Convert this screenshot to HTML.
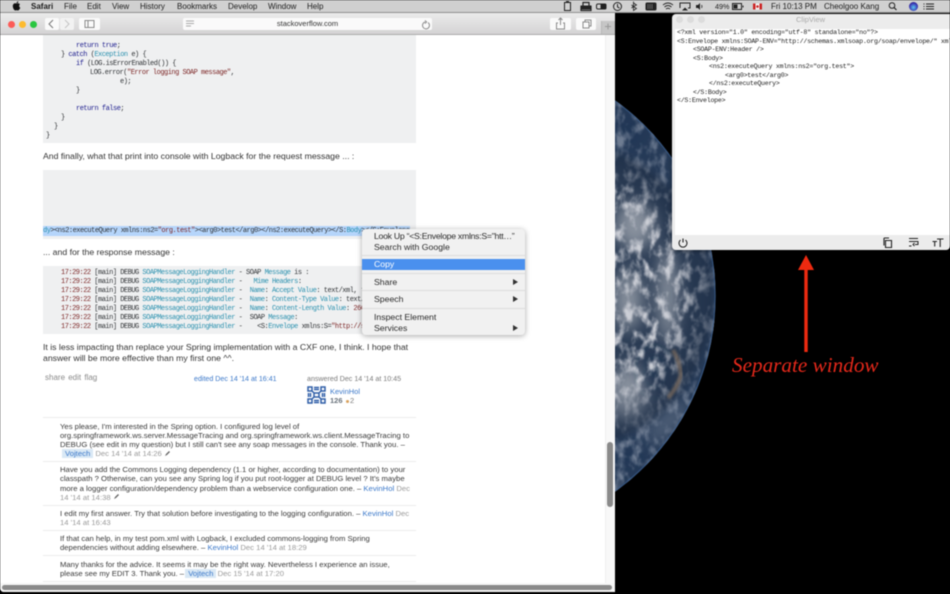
<!DOCTYPE html>
<html><head><meta charset="utf-8"><style>
html,body{margin:0;padding:0;background:#000}
#r{position:relative;width:950px;height:594px;overflow:hidden;background:#000;font-family:"Liberation Sans",sans-serif;filter:blur(.4px)}
#r>*,.a{position:absolute}
.t{position:absolute;white-space:pre;line-height:10px;height:10px}
.b{font-size:8.7px;color:#333}
.c{font-size:7.7px;color:#3a3a3a;transform:translateY(1px)}
.m{font-family:"Liberation Mono",monospace;font-size:7px;letter-spacing:-.5px;color:#303336;transform:translateY(1px)}
.mb{font-size:8px;color:#1c1c1c}
.k{color:#1a1a8c}.s{color:#7d2727}.y{color:#2b91af}
.l{color:#3b78c9}.g{color:#9a9a9a}.u{background:#d9e8f5;color:#3b78c9;padding:0 3px}
.sep{position:absolute;left:43px;width:373px;height:1px;background:#eceded}
.mi{font-size:8.7px;color:#2a2a2a}
.ar{position:absolute;width:0;height:0;border-left:5px solid #333;border-top:3px solid transparent;border-bottom:3px solid transparent;left:513px}
.cv{font-family:"Liberation Mono",monospace;font-size:6.6px;letter-spacing:-.24px;color:#222;transform:translateY(1px)}
</style></head><body><div id="r">

<svg style="left:0;top:0" width="950" height="594">
<defs>
<clipPath id="e"><circle cx="475" cy="296" r="240.7"/></clipPath>
<radialGradient id="dk" gradientUnits="userSpaceOnUse" cx="560" cy="296" r="160"><stop offset=".72" stop-color="#1e2f48" stop-opacity="0"/><stop offset=".94" stop-color="#1e2f48" stop-opacity=".7"/><stop offset="1" stop-color="#22395a" stop-opacity=".55"/></radialGradient>
<filter id="cl" x="0" y="0" width="100%" height="100%" color-interpolation-filters="sRGB"><feTurbulence type="fractalNoise" baseFrequency=".12 .075" numOctaves="4" seed="5"/><feColorMatrix values="0 0 0 0 .8 0 0 0 0 .81 0 0 0 0 .84 3 0 0 0 -1.3"/><feGaussianBlur stdDeviation=".6"/></filter>
<filter id="bl"><feGaussianBlur stdDeviation="8"/></filter>
<filter id="bs"><feGaussianBlur stdDeviation="1.2"/></filter>
</defs>
<circle cx="475" cy="296" r="240.7" fill="#2c3d55"/>
<g clip-path="url(#e)">
<g filter="url(#bl)" fill="#b0b5bd" opacity=".7">
<ellipse cx="630" cy="395" rx="20" ry="30"/><ellipse cx="668" cy="295" rx="10" ry="48"/><ellipse cx="635" cy="225" rx="20" ry="24"/><ellipse cx="668" cy="422" rx="28" ry="10" transform="rotate(-45 668 422)"/><ellipse cx="628" cy="300" rx="14" ry="30"/>
</g>
<g filter="url(#bl)" fill="#1f3350" opacity=".8">
<ellipse cx="655" cy="372" rx="10" ry="20"/><ellipse cx="628" cy="130" rx="20" ry="20"/><ellipse cx="630" cy="458" rx="14" ry="12"/>
</g>
<rect x="600" y="90" width="120" height="410" filter="url(#cl)"/>
<rect x="600" y="90" width="120" height="410" fill="url(#dk)"/>
<path d="M673 350Q680 362 681 375Q677 388 668 398" fill="none" stroke="#77675c" stroke-width="4" opacity=".8" filter="url(#bs)"/>
<circle cx="475" cy="296" r="240" fill="none" stroke="#3a5f90" stroke-width="1.200" opacity=".6"/>
</g>
</svg>

<!-- Browser window -->
<div style="left:0;top:13px;width:615px;height:579px;background:#fff;border-radius:0 0 4px 4px"></div>
<div style="left:605px;top:35px;width:10px;height:557px;background:#f8f8f8;border-left:1px solid #efefef;box-sizing:border-box"></div>

<!-- code blocks -->
<div style="left:43px;top:35px;width:373px;height:108px;background:#eff0f1"></div>
<div style="left:43px;top:170px;width:373px;height:69px;background:#eff0f1"></div>
<div style="left:43px;top:266px;width:373px;height:68px;background:#eff0f1"></div>
<div style="left:43px;top:226px;width:367px;height:10px;background:#b5d5fb"></div>

<div class="t m" style="left:76px;top:40px"><span class="k">return true</span>;</div>
<div class="t m" style="left:61px;top:49px">} <span class="k">catch</span> (<span class="y">Exception</span> e) {</div>
<div class="t m" style="left:76px;top:58px"><span class="k">if</span> (LOG.isErrorEnabled()) {</div>
<div class="t m" style="left:90px;top:67px">LOG.error(<span class="s">"Error logging SOAP message"</span>,</div>
<div class="t m" style="left:120px;top:76px">e);</div>
<div class="t m" style="left:76px;top:85px">}</div>
<div class="t m" style="left:76px;top:103px"><span class="k">return false</span>;</div>
<div class="t m" style="left:61px;top:112px">}</div>
<div class="t m" style="left:54px;top:121px">}</div>
<div class="t m" style="left:46px;top:130px">}</div>

<div class="t b" style="left:43px;top:151px">And finally, what that print into console with Logback for the request message ... :</div>
<div class="t m" style="left:43px;top:225px;width:367px;overflow:hidden"><span class="y">dy</span>&gt;&lt;ns2:executeQuery xmlns:ns2=<span class="s">"org.test"</span>&gt;&lt;arg0&gt;test&lt;/arg0&gt;&lt;/ns2:executeQuery&gt;&lt;/S:<span class="y">Body</span>&gt;&lt;/S:Envelope&gt;</div>
<div class="t b" style="left:43px;top:247px">... and for the response message :</div>

<div class="t m" style="left:61px;top:267px"><span class="s">17:29:22</span> [main] DEBUG <span class="y">SOAPMessageLoggingHandler</span> - SOAP <span class="y">Message</span> is :</div>
<div class="t m" style="left:61px;top:276px"><span class="s">17:29:22</span> [main] DEBUG <span class="y">SOAPMessageLoggingHandler</span> -   <span class="y">Mime Headers</span>:</div>
<div class="t m" style="left:61px;top:285px"><span class="s">17:29:22</span> [main] DEBUG <span class="y">SOAPMessageLoggingHandler</span> -  <span class="y">Name</span>: <span class="y">Accept Value</span>: text/xml, t</div>
<div class="t m" style="left:61px;top:294px"><span class="s">17:29:22</span> [main] DEBUG <span class="y">SOAPMessageLoggingHandler</span> -  <span class="y">Name</span>: <span class="y">Content-Type Value</span>: text/</div>
<div class="t m" style="left:61px;top:303px"><span class="s">17:29:22</span> [main] DEBUG <span class="y">SOAPMessageLoggingHandler</span> -  <span class="y">Name</span>: <span class="y">Content-Length Value</span>: <span class="s">266</span></div>
<div class="t m" style="left:61px;top:312px"><span class="s">17:29:22</span> [main] DEBUG <span class="y">SOAPMessageLoggingHandler</span> -  SOAP <span class="y">Message</span>:</div>
<div class="t m" style="left:61px;top:321px"><span class="s">17:29:22</span> [main] DEBUG <span class="y">SOAPMessageLoggingHandler</span> -    &lt;S:<span class="y">Envelope</span> xmlns:S=<span class="s">"http://s</span></div>

<div class="t b" style="left:43px;top:342px">It is less impacting than replace your Spring implementation with a CXF one, I think. I hope that</div>
<div class="t b" style="left:43px;top:353px">answer will be more effective than my first one ^^.</div>

<div class="t" style="left:45px;top:373px;font-size:8px;color:#8a8a8a;word-spacing:1px">share edit flag</div>
<div class="t l" style="left:194px;top:374px;font-size:7.1px">edited Dec 14 '14 at 16:41</div>
<div class="t" style="left:307px;top:374px;font-size:7.1px;color:#7a7a7a">answered Dec 14 '14 at 10:45</div>
<svg style="left:307px;top:386px" width="19" height="18" viewBox="0 0 19 18" fill="none" stroke="#2f5ea8" stroke-width="1.500">
<path d="M1 1h4v4h-4zM14 1h4v4h-4zM1 13h4v4h-4zM14 13h4v4h-4zM7 1.500h5M7 3.500h5M7 14.500h5M7 16.500h5M1.500 7v4M3.500 7v4M15.500 7v4M17.500 7v4M7 7h5v4h-5zM5 5l2 2M14 5l-2 2M5 13l2-2M14 13l-2-2"/></svg>
<div class="t l" style="left:330px;top:387px;font-size:7.5px">KevinHol</div>
<div class="t" style="left:330px;top:396px;font-size:7.5px;color:#6a737c;font-weight:bold">126</div>
<div style="left:346px;top:400px;width:3px;height:3px;border-radius:50%;background:#d9a15c"></div>
<div class="t" style="left:350px;top:396px;font-size:7.5px;color:#7a7a7a">2</div>

<div class="sep" style="top:417px"></div>
<div class="t c" style="left:60px;top:421px">Yes please, I'm interested in the Spring option. I configured log level of</div>
<div class="t c" style="left:60px;top:430px">org.springframework.ws.server.MessageTracing and org.springframework.ws.client.MessageTracing to</div>
<div class="t c" style="left:60px;top:439px">DEBUG (see edit in my question) but I still can't see any soap messages in the console. Thank you. –</div>
<div class="t c" style="left:62px;top:448px"><span class="u">Vojtech</span> <span class="g">Dec 14 '14 at 14:26</span></div>
<svg style="left:164px;top:450px" width="7" height="7" viewBox="0 0 7 7"><path d="M1 6L2 4L5 1L6 2L3 5Z" fill="#666"/></svg>

<div class="sep" style="top:461px"></div>
<div class="t c" style="left:60px;top:464px">Have you add the Commons Logging dependency (1.1 or higher, according to documentation) to your</div>
<div class="t c" style="left:60px;top:473px">classpath ? Otherwise, can you see any Spring log if you put root-logger at DEBUG level ? It's maybe</div>
<div class="t c" style="left:60px;top:483px">more a logger configuration/dependency problem than a webservice configuration one. – <span class="l">KevinHol</span> <span class="g">Dec</span></div>
<div class="t c" style="left:60px;top:492px;color:#9a9a9a">14 '14 at 14:38</div>
<svg style="left:113px;top:493px" width="7" height="7" viewBox="0 0 7 7"><path d="M1 6L2 4L5 1L6 2L3 5Z" fill="#666"/></svg>

<div class="sep" style="top:505px"></div>
<div class="t c" style="left:60px;top:508px">I edit my first answer. Try that solution before investigating to the logging configuration. – <span class="l">KevinHol</span> <span class="g">Dec</span></div>
<div class="t c" style="left:60px;top:517px;color:#9a9a9a">14 '14 at 16:43</div>

<div class="sep" style="top:530px"></div>
<div class="t c" style="left:60px;top:533px">If that can help, in my test pom.xml with Logback, I excluded commons-logging from Spring</div>
<div class="t c" style="left:60px;top:542px">dependencies without adding elsewhere. – <span class="l">KevinHol</span> <span class="g">Dec 14 '14 at 18:29</span></div>

<div class="sep" style="top:555px"></div>
<div class="t c" style="left:60px;top:559px">Many thanks for the advice. It seems it may be the right way. Nevertheless I experience an issue,</div>
<div class="t c" style="left:60px;top:568px">please see my EDIT 3. Thank you. – <span class="u" style="margin-left:-1px">Vojtech</span> <span class="g" style="margin-left:-1px">Dec 15 '14 at 17:20</span></div>
<div class="sep" style="top:581px"></div>

<div style="left:0;top:583px;width:615px;height:9px;background:#f6f6f6;border-radius:0 0 4px 4px"></div>
<div style="left:2px;top:585px;width:610px;height:5px;background:#8a8a8a;border-radius:3px"></div>
<div style="left:607px;top:442px;width:6px;height:65px;background:#8a8a8a;border-radius:3px"></div>

<!-- Context menu -->
<div style="left:362px;top:229px;width:163px;height:106px;background:#f1f1f1;border-radius:4px;box-shadow:0 1px 6px rgba(0,0,0,.35)"></div>
<div style="left:362px;top:259px;width:163px;height:11px;background:#4a90ee"></div>
<div style="left:362px;top:255px;width:163px;height:1px;background:#dcdcdc"></div>
<div style="left:362px;top:273px;width:163px;height:1px;background:#dcdcdc"></div>
<div style="left:362px;top:290px;width:163px;height:1px;background:#dcdcdc"></div>
<div style="left:362px;top:308px;width:163px;height:1px;background:#dcdcdc"></div>
<div class="t mi" style="left:374px;top:231px;letter-spacing:-.27px">Look Up “&lt;S:Envelope xmlns:S="htt…”</div>
<div class="t mi" style="left:374px;top:242px">Search with Google</div>
<div class="t mi" style="left:374px;top:259px;color:#fff">Copy</div>
<div class="t mi" style="left:374px;top:277px">Share</div>
<div class="t mi" style="left:374px;top:294px">Speech</div>
<div class="t mi" style="left:374px;top:312px">Inspect Element</div>
<div class="t mi" style="left:374px;top:323px">Services</div>
<div class="ar" style="top:279px"></div><div class="ar" style="top:296px"></div><div class="ar" style="top:325px"></div>

<!-- Toolbar -->
<div style="left:0;top:13px;width:615px;height:22px;background:linear-gradient(#ebebeb,#d4d3d4);border-bottom:1px solid #ababab;box-sizing:border-box"></div>
<div style="left:8px;top:20.5px;width:7px;height:7px;border-radius:50%;background:#fc5b57"></div>
<div style="left:19px;top:20.5px;width:7px;height:7px;border-radius:50%;background:#fdbb2f"></div>
<div style="left:30px;top:20.5px;width:7px;height:7px;border-radius:50%;background:#29c640"></div>
<div style="left:45px;top:18px;width:14px;height:12px;background:#fafafa;border-radius:2px"></div>
<div style="left:60px;top:18px;width:14px;height:12px;background:#f2f2f2;border-radius:2px"></div>
<div style="left:79px;top:18px;width:21px;height:12px;background:#fafafa;border-radius:2px"></div>
<div style="left:183px;top:18px;width:249px;height:12px;background:#fafafa;border-radius:2px"></div>
<div style="left:550px;top:18px;width:21px;height:12px;background:#fafafa;border-radius:2px"></div>
<div style="left:576px;top:18px;width:20px;height:12px;background:#fafafa;border-radius:2px"></div>
<div style="left:601px;top:21px;width:14px;height:13px;background:#c6c6c6;border-left:1px solid #b8b8b8;box-sizing:border-box"></div>
<svg style="left:0;top:13px" width="615" height="22" fill="none" stroke="#8a8a8a" stroke-width="1">
<path d="M53 7L49 11L53 15" stroke="#777"/><path d="M65 7L69 11L65 15" stroke="#c4c4c4"/>
<rect x="85" y="7.5" width="9" height="7"/><path d="M88 7.5v7"/>
<path d="M186 8h8M186 10.500h8M186 13h5" stroke="#aaa"/>
<path d="M428 9.500a3.500 3.500 0 1 1-3-.5M425 7.500l1.500 1.500l-1.500 1.500" stroke="#888"/>
<path d="M558 10h-1.500v6h8v-6H563M560.500 12V5M558.500 7l2-2l2 2"/>
<rect x="583" y="9" width="6" height="6"/><path d="M585 9V7h6v6h-2"/>
<path d="M608 10.500v6M605 13.500h6" stroke="#999"/>
</svg>
<div class="t" style="left:183px;top:19px;width:249px;text-align:center;font-size:7.5px;color:#333">stackoverflow.com</div>

<!-- Menubar -->
<div style="left:0;top:0;width:950px;height:13px;background:#d0d0d0;border-bottom:1px solid #8f8f8f;box-sizing:border-box"></div>
<svg style="left:12px;top:1px" width="9" height="10" viewBox="0 0 9 10"><path d="M4.500 2.500C3.500 2 1 2 .8 5C.8 7.500 2.500 9.500 3.300 9.500C4 9.500 4 9.200 4.600 9.200C5.200 9.200 5.300 9.500 6 9.500C7 9.500 8 7.500 8.300 6.800C7 6.200 6.800 4 8 3.300C7 2 5.500 2 4.500 2.500ZM4.500 2.300C4.500 1 5.500 .2 6.300 .2C6.400 1.300 5.500 2.300 4.500 2.300Z" fill="#111"/></svg>
<div class="t mb" style="left:31px;top:2px;font-weight:bold">Safari</div>
<div class="t mb" style="left:64px;top:2px">File</div>
<div class="t mb" style="left:87px;top:2px">Edit</div>
<div class="t mb" style="left:112px;top:2px">View</div>
<div class="t mb" style="left:140px;top:2px">History</div>
<div class="t mb" style="left:177px;top:2px">Bookmarks</div>
<div class="t mb" style="left:228px;top:2px">Develop</div>
<div class="t mb" style="left:268px;top:2px">Window</div>
<div class="t mb" style="left:307px;top:2px">Help</div>
<svg style="left:560px;top:0" width="390" height="13" fill="none" stroke="#222" stroke-width="1">
<rect x="4.500" y="2.500" width="6" height="8"/><path d="M6 2h3" stroke-width="2"/>
<path d="M21 6.500h10v4h-10zM23 6V2.500h6V6" stroke-width="1.200"/><rect x="21" y="6" width="10" height="3" fill="#222"/>
<rect x="36.500" y="4" width="9" height="5" rx="1.500"/><rect x="41" y="4" width="5" height="5" rx="1" fill="#222"/>
<circle cx="57.500" cy="6.500" r="4"/><path d="M57.500 4v3l2 1"/>
<path d="M71 3.500l3 2-3 1.500 3 2-3 2V2M71 7l-2-1.500M71 7l-2 1.500" stroke-width=".8" transform="translate(2.500,-.5)"/>
<rect x="86" y="3" width="10" height="7" rx="1" fill="#222"/><path d="M88 4v5M90 4v5M92 4v5" stroke="#999" stroke-width=".6"/>
<path d="M103 5q5-4 10 0M104.500 7q3.500-3 7 0M106 9q2-1.500 4 0" stroke-width="1"/>
<path d="M120 8V3h10v5h-2"/><path d="M122 10.500h6l-3-3z" fill="#222" stroke="none"/>
<path d="M136 5h2l2-2v7l-2-2h-2z" fill="#222" stroke="none"/><path d="M141.500 5q1 1.500 0 3" stroke-width=".7"/>
<rect x="172.500" y="3.500" width="9" height="6"/><rect x="173.500" y="4.500" width="4" height="4" fill="#222" stroke="none"/><path d="M183 5.500v2"/>
<rect x="193" y="3.500" width="9" height="6" fill="#f3f3f3" stroke="none"/><rect x="193" y="3.500" width="2.500" height="6" fill="#c22" stroke="none"/><rect x="199.500" y="3.500" width="2.500" height="6" fill="#c22" stroke="none"/><circle cx="197.500" cy="6.500" r="1.300" fill="#c22" stroke="none"/>
<circle cx="332" cy="5.500" r="2.800" stroke-width="1"/><path d="M334 7.500l2.500 2.500" stroke-width="1.200"/>
<path d="M366 4h8M366 6.500h8M366 9h8M363.500 4h1M363.500 6.500h1M363.500 9h1" stroke-width="1"/>
</svg>
<div style="left:908.500px;top:2px;width:9px;height:9px;border-radius:50%;background:radial-gradient(circle at 50% 60%,#5bc8f0,#3a2fb0 60%,#14143c)"></div>
<div class="t" style="left:715px;top:2px;font-size:7.2px;color:#1c1c1c">49%</div>
<div class="t mb" style="left:771px;top:2px">Fri 10:13 PM</div>
<div class="t mb" style="left:824px;top:2px">Cheolgoo Kang</div>

<!-- ClipView -->
<div style="left:672px;top:14px;width:278px;height:236px;background:#ececec;border-radius:4px 0 4px 4px;box-shadow:0 1px 4px rgba(0,0,0,.4)"></div>
<div style="left:675px;top:29px;width:275px;height:206px;background:#fff"></div>
<div style="left:676px;top:16px;width:7px;height:7px;border-radius:50%;background:#dcdcdc"></div>
<div style="left:687px;top:16px;width:7px;height:7px;border-radius:50%;background:#dcdcdc"></div>
<div style="left:698px;top:16px;width:7px;height:7px;border-radius:50%;background:#dcdcdc"></div>
<div class="t" style="left:796px;top:15px;font-size:7.500px;color:#aaa">ClipView</div>
<div class="t cv" style="left:677px;top:27px">&lt;?xml version="1.0" encoding="utf-8" standalone="no"?&gt;</div>
<div class="t cv" style="left:677px;top:36px;width:273px;overflow:hidden">&lt;S:Envelope xmlns:SOAP-ENV="http://schemas.xmlsoap.org/soap/envelope/" xmlns</div>
<div class="t cv" style="left:693px;top:44px">&lt;SOAP-ENV:Header /&gt;</div>
<div class="t cv" style="left:693px;top:53px">&lt;S:Body&gt;</div>
<div class="t cv" style="left:709px;top:61px">&lt;ns2:executeQuery xmlns:ns2="org.test"&gt;</div>
<div class="t cv" style="left:725px;top:70px">&lt;arg0&gt;test&lt;/arg0&gt;</div>
<div class="t cv" style="left:709px;top:78px">&lt;/ns2:executeQuery&gt;</div>
<div class="t cv" style="left:693px;top:87px">&lt;/S:Body&gt;</div>
<div class="t cv" style="left:677px;top:95px">&lt;/S:Envelope&gt;</div>
<svg style="left:672px;top:235px" width="278" height="15" fill="none" stroke="#222" stroke-width="1.100">
<path d="M11 3.500v4M8.500 5a4 4 0 1 0 5 0"/>
<path d="M212 3h5M213.500 5.500h6v7h-6zM212 3v7.500"/>
<path d="M237 3.500h9M237 6.500h9v3h-3M237 11h2.500M242.500 8l-1.500 1.500l1.500 1.500" stroke-width="1"/>
<path d="M260.500 6.500h4.500M262.700 6.500v5M265 4h6.500M268.200 4v8" stroke-width="1.100"/>
</svg>

<!-- annotation -->
<svg style="left:780px;top:250px" width="50" height="110"><path d="M24.300 20h3.400v82h-3.400z" fill="#ee2a10"/><path d="M26 5L34 20H18z" fill="#ee2a10"/></svg>
<div class="t" style="left:732px;top:360px;font-family:'Liberation Serif',serif;font-style:italic;font-size:21.200px;color:#e5281a">Separate window</div>
</div></body></html>
